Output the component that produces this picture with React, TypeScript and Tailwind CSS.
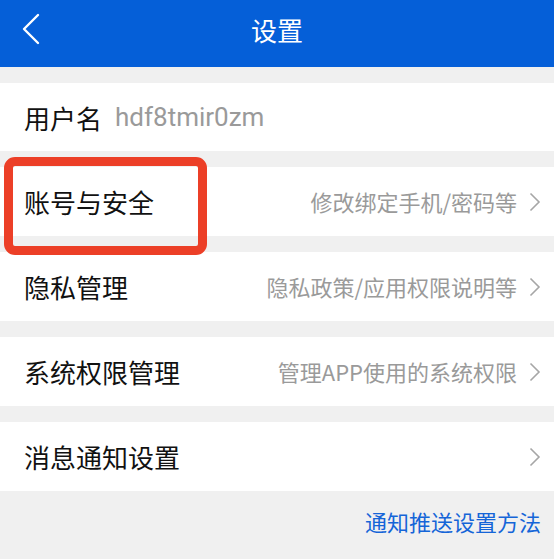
const rows = [
  { title: "账号与安全", hint: "修改绑定手机/密码等" },
  { title: "隐私管理", hint: "隐私政策/应用权限说明等" },
  { title: "系统权限管理", hint: "管理APP使用的系统权限" },
  { title: "消息通知设置", hint: "" },
];

function Arrow() {
  return (
    <svg width="12" height="20" viewBox="0 0 12 20" className="ml-[12px] shrink-0">
      <polyline points="1.5,1.5 10,10 1.5,18.5" fill="none" stroke="#a6a6a6" strokeWidth="1.6" />
    </svg>
  );
}

export default function App() {
  return (
    <div
      className="relative min-h-[559px] bg-[#f0f0f0]"
      style={{ fontFamily: '"Noto Sans CJK SC", Roboto, sans-serif' }}
    >
      {/* Header */}
      <div className="relative flex h-[67px] justify-center bg-[#055fd8] pt-[11px]">
        <svg width="20" height="32" viewBox="0 0 20 32" className="absolute left-[21px] top-[13px]">
          <polyline points="17,2 3,16 17,30" fill="none" stroke="white" strokeWidth="2.4" strokeLinecap="round" strokeLinejoin="round" />
        </svg>
        <h1 className="text-[26px] leading-[38px] text-white">设置</h1>
      </div>

      <div className="flex flex-col gap-[16px] pt-[16px]">
        <div className="flex h-[68px] items-center gap-[13px] bg-white px-[24px]">
          <span className="text-[26px] text-[#111]">用户名</span>
          <span className="text-[26px] text-[#9a9a9a]" style={{ fontFamily: "Roboto, sans-serif" }}>
            hdf8tmir0zm
          </span>
        </div>

        {rows.map((row) => (
          <div key={row.title} className="flex h-[69px] items-center bg-white pl-[24px] pr-[13px]">
            <span className="flex-1 text-[26px] text-[#111]">{row.title}</span>
            <span className="text-[22px] text-[#9a9a9a]">{row.hint}</span>
            <Arrow />
          </div>
        ))}
      </div>

      <div className="flex justify-end px-[13px] pt-[14px]">
        <span className="text-[22px] text-[#1565d8]">通知推送设置方法</span>
      </div>

      {/* annotation box */}
      <div className="absolute left-[4px] top-[157px] h-[98px] w-[203px] rounded-[11px] border-[9px] border-[#ec3f27]" />
    </div>
  );
}
